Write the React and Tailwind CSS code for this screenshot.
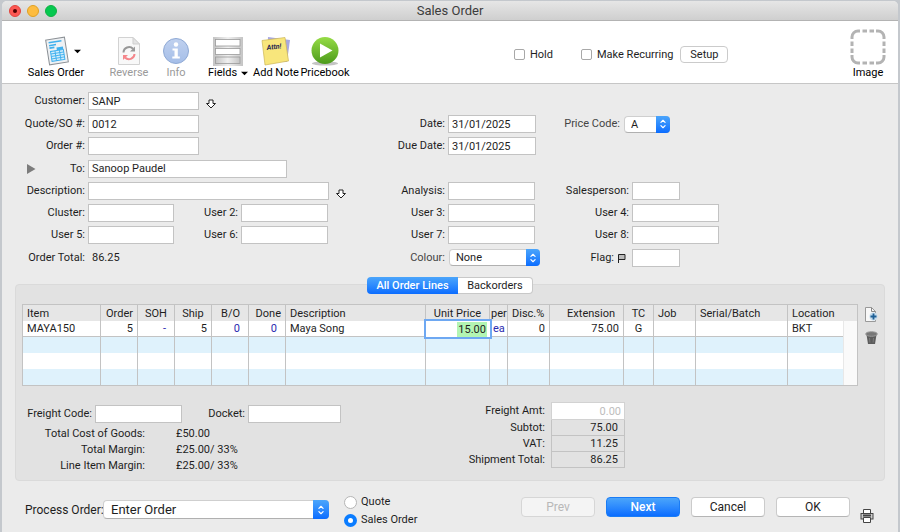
import React from 'react';

const lines = [
  { item: 'MAYA150', order: '5', soh: '-', ship: '5', bo: '0', done: '0', desc: 'Maya Song', price: '15.00', per: 'ea', disc: '0', ext: '75.00', tc: 'G', job: '', serial: '', location: 'BKT' },
];

function Field({ id, label, value = '', labelWidth, width, place = '' }) {
  return (
    <div className={`flex items-center gap-[3px] ${place}`}>
      <label htmlFor={id} className={`shrink-0 text-right whitespace-nowrap ${labelWidth}`}>{label}</label>
      <input id={id} type="text" defaultValue={value} className={`h-[18px] border border-[#c3c3c3] bg-white px-[3px] outline-none ${width}`} />
    </div>
  );
}

function Stepper({ className }) {
  return (
    <span className={`pointer-events-none absolute right-0 top-0 flex h-full items-center justify-center rounded-r-[4px] bg-gradient-to-b from-[#4ba5fb] to-[#0a6cff] ${className}`}>
      <svg viewBox="0 0 8 12" className="h-[10px] w-2" fill="none" stroke="#fff" strokeWidth="1.4" strokeLinecap="round" strokeLinejoin="round">
        <path d="M1.5 4 4 1.5 6.5 4M1.5 8 4 10.5 6.5 8" />
      </svg>
    </span>
  );
}

function Popup({ id, options, className = '', selectClass = '', stepper = 'w-[14px]' }) {
  return (
    <span className={`relative block ${className}`}>
      <select id={id} className={`block h-full w-full appearance-none rounded-[4px] border border-[#cfcfcf] border-b-[#b0b0b0] bg-white outline-none ${selectClass}`}>
        {options.map((o) => <option key={o}>{o}</option>)}
      </select>
      <Stepper className={stepper} />
    </span>
  );
}

function DownArrow() {
  return (
    <button type="button" aria-label="Choose" className="mt-[6px] ml-[6px]">
      <svg viewBox="0 0 12 10" className="h-[10px] w-3" fill="#fff" stroke="#222" strokeWidth="1">
        <path d="M4 1h4v3.5h2.5L6 9 1.5 4.5H4z" />
      </svg>
    </button>
  );
}

function Caret() {
  return (
    <svg viewBox="0 0 8 5" className="h-[5px] w-[7px]"><path d="M0 .5h8L4 4.5z" fill="#000" /></svg>
  );
}

function SalesOrderIcon() {
  return (
    <svg viewBox="0 0 26 30" className="h-[30px] w-[26px]">
      <g transform="rotate(-9 13 15)">
        <rect x="3.500" y="2.500" width="19" height="25" fill="#eef1f4" stroke="#8b9095" />
        <path d="M6 5.500h13M6 8.500h7M6 11h5" stroke="#3fb0ee" strokeWidth="1.600" />
        <path d="M13 11.500h6.500v3H13z" fill="#3fb0ee" />
        <rect x="6.500" y="14.500" width="13" height="10" fill="#d3edfb" stroke="#3fb0ee" />
        <path d="M6.500 17h13M6.500 19.500h13M6.500 22h13M11 14.500v10M15.500 14.500v10" stroke="#3fb0ee" strokeWidth=".9" />
      </g>
    </svg>
  );
}

function ReverseIcon() {
  return (
    <svg viewBox="0 0 22 30" className="h-[30px] w-[22px]" fill="none">
      <path d="M.5 1.500h14.500l6.500 6.500v20.500H.5z" fill="#f8f8f8" stroke="#d2d2d2" />
      <path d="M15 1.500V8h6.500z" fill="#e4e4e4" stroke="#cfcfcf" />
      <path d="M5.500 16.500a5.500 5.500 0 0 1 9.500-3.700" stroke="#989898" strokeWidth="2" />
      <path d="M17 10.500v5h-5z" fill="#989898" />
      <path d="M16.500 18a5.500 5.500 0 0 1-9.500 3.500" stroke="#f5868b" strokeWidth="2" />
      <path d="M5 24v-5h5z" fill="#f5868b" />
    </svg>
  );
}

function InfoIcon() {
  return (
    <svg viewBox="0 0 26 28" className="h-[28px] w-[26px]">
      <defs>
        <linearGradient id="info" x1="0" y1="0" x2="0" y2="1">
          <stop offset="0" stopColor="#c0d1ef" />
          <stop offset="1" stopColor="#a5bee8" />
        </linearGradient>
      </defs>
      <circle cx="13" cy="14" r="12.500" fill="url(#info)" stroke="#8fa9d4" />
      <circle cx="13" cy="7.500" r="2.200" fill="#fff" />
      <path d="M9.500 11.500h5.300v8h2v2H9.300v-2h2.200v-6h-2z" fill="#fff" />
    </svg>
  );
}

function FieldsIcon() {
  return (
    <svg viewBox="0 0 30 30" className="h-[30px] w-[30px]">
      <defs>
        <linearGradient id="fields" x1="0" x2="1">
          <stop offset="0" stopColor="#c4c4c4" />
          <stop offset=".5" stopColor="#f0f0f0" />
          <stop offset="1" stopColor="#c4c4c4" />
        </linearGradient>
      </defs>
      <rect y="1" width="30" height="29" fill="url(#fields)" />
      <g fill="#fff" stroke="#9a9a9a" strokeWidth=".8">
        <rect x="2.500" y="3.500" width="24.500" height="6.500" />
        <rect x="2.500" y="12.500" width="24.500" height="6" />
        <rect x="2.500" y="21" width="24.500" height="6.500" fill="url(#fields)" />
      </g>
    </svg>
  );
}

function NoteIcon() {
  return (
    <svg viewBox="0 0 30 30" className="h-[30px] w-[30px]">
      <path d="M7 1l22 3-3 22-20-2z" fill="#a9a9e0" />
      <path d="M1 4.500 24 1.500 27.500 25 4 29z" fill="#f8e67c" stroke="#cdb656" strokeWidth=".7" />
      <text x="6" y="14" transform="rotate(-7 6 14)" fontSize="7" fontWeight="700" fontStyle="italic" fill="#23234f">Attn!</text>
    </svg>
  );
}

function PlayIcon() {
  return (
    <svg viewBox="0 0 30 30" className="h-[30px] w-[30px]">
      <defs>
        <linearGradient id="play" x1="0" y1="0" x2="0" y2="1">
          <stop offset="0" stopColor="#96dc46" />
          <stop offset="1" stopColor="#4c9a1b" />
        </linearGradient>
      </defs>
      <ellipse cx="15" cy="27.500" rx="13" ry="2" fill="#c4c4c4" />
      <circle cx="15" cy="14.500" r="13.500" fill="url(#play)" />
      <path d="M10 7.500v14l12.500-7z" fill="#fff" />
    </svg>
  );
}

function ToolButton({ icon, label, width, disabled, menu, sideMenu }) {
  return (
    <button type="button" disabled={disabled} className={`flex shrink-0 flex-col items-center ${width} ${disabled ? 'text-[#9a9a9a]' : 'text-black'}`}>
      <span className="flex h-[30px] items-center gap-1">
        {sideMenu && <span className="w-[9px]" />}
        {icon}
        {sideMenu && <Caret />}
      </span>
      <span className="flex items-center gap-1 whitespace-nowrap leading-[14px]">{label}{menu && <Caret />}</span>
    </button>
  );
}

function PushButton({ children, kind = 'plain' }) {
  const kinds = {
    plain: 'border-[#cbcbcb] border-b-[#b5b5b5] bg-white text-[#222]',
    primary: 'border-[#1a7cf5] bg-gradient-to-b from-[#4ba5fb] to-[#0a6cff] text-white font-medium',
    disabled: 'border-[#d6d6d6] bg-[#f4f4f4] text-[#b8b8b8]',
  };
  return (
    <button type="button" disabled={kind === 'disabled'} className={`h-5 w-[74px] rounded-[4px] border text-xs leading-4 ${kinds[kind]}`}>{children}</button>
  );
}

function OrderLines() {
  const th = 'h-4 overflow-hidden border-r border-[#c3c3c3] px-1 font-normal whitespace-nowrap';
  const td = 'h-4 border-r border-b border-[#c3c3c3] px-1 whitespace-nowrap';
  return (
    <table className="w-full table-fixed border-separate border-spacing-0 border border-[#c3c3c3] bg-white leading-[15px]">
      <colgroup>
        <col className="w-[78px]" />
        <col className="w-[37px]" />
        <col className="w-[37px]" />
        <col className="w-[37px]" />
        <col className="w-[37px]" />
        <col className="w-[37px]" />
        <col />
        <col className="w-[64px]" />
        <col className="w-[18px]" />
        <col className="w-[42px]" />
        <col className="w-[74px]" />
        <col className="w-[30px]" />
        <col className="w-[42px]" />
        <col className="w-[92px]" />
        <col className="w-[55px]" />
        <col className="w-[14px]" />
      </colgroup>
      <thead className="bg-[#e6e6e6] text-left">
        <tr>
          <th className={th}>Item</th>
          <th className={`${th} text-right`}>Order</th>
          <th className={`${th} text-center`}>SOH</th>
          <th className={`${th} text-center`}>Ship</th>
          <th className={`${th} text-right`}><span className="pr-1">B/O</span></th>
          <th className={`${th} text-right`}>Done</th>
          <th className={th}>Description</th>
          <th className={`${th} text-right`}><span className="pr-1">Unit Price</span></th>
          <th className="h-4 border-r border-[#c3c3c3] pl-px font-normal whitespace-nowrap">per</th>
          <th className={th}>Disc.%</th>
          <th className={`${th} text-right`}><span className="pr-1">Extension</span></th>
          <th className={`${th} text-center`}>TC</th>
          <th className={th}>Job</th>
          <th className={th}>Serial/Batch</th>
          <th className="px-1 font-normal" colSpan={2}>Location</th>
        </tr>
      </thead>
      <tbody>
        {lines.map((l) => (
          <tr key={l.item}>
            <td className={td}>{l.item}</td>
            <td className={`${td} text-right`}>{l.order}</td>
            <td className={`${td} text-right text-[#2a2ab0]`}><span className="pr-1">{l.soh}</span></td>
            <td className={`${td} text-right`}>{l.ship}</td>
            <td className={`${td} text-right text-[#2a2ab0]`}><span className="pr-1">{l.bo}</span></td>
            <td className={`${td} text-right text-[#2a2ab0]`}><span className="pr-1">{l.done}</span></td>
            <td className={td}>{l.desc}</td>
            <td className="h-4 p-0">
              <div className="relative flex h-4 items-center justify-end bg-white pr-[3px] ring-2 ring-[#6ea8f2]">
                <span className="bg-[#b3f5b3] px-px">{l.price}</span>
              </div>
            </td>
            <td className="h-4 border-r border-b border-[#c3c3c3] pl-[3px] text-[#2a2ab0]">{l.per}</td>
            <td className={`${td} text-right`}>{l.disc}</td>
            <td className={`${td} text-right`}>{l.ext}</td>
            <td className={`${td} text-center`}>{l.tc}</td>
            <td className={td}>{l.job}</td>
            <td className={td}>{l.serial}</td>
            <td className="h-4 border-b border-[#c3c3c3] px-1">{l.location}</td>
            <td rowSpan={4} className="border-l border-[#e8e8e8] bg-[#fafafa]" />
          </tr>
        ))}
        {[0, 1, 2].map((r) => (
          <tr key={r} className={r % 2 === 0 ? 'bg-[#dff2fc]' : 'bg-white'}>
            {Array.from({ length: 14 }, (_, c) => <td key={c} className="h-4 border-r border-[#c3c3c3]" />)}
            <td className="h-4" />
          </tr>
        ))}
      </tbody>
    </table>
  );
}

export default function App() {
  return (
    <div className="min-h-screen bg-[#c4c8cd] px-[2px] pt-[1px] font-[Roboto,'Liberation_Sans',sans-serif] text-[11px] leading-4 text-[#1e1e1e]">
      <div className="flex min-h-[calc(100vh-1px)] flex-col overflow-hidden rounded-t-[5px] bg-[#ebebeb]">
        <header className="relative flex h-5 items-center gap-[6px] border-b border-[#b3b3b3] bg-gradient-to-b from-[#e6e6e6] to-[#cfcfcf] px-[7px]">
          <button type="button" aria-label="Close" className="flex size-3 items-center justify-center rounded-full border border-[#e0443e] bg-[#fc5753]"><span className="size-1 rounded-full bg-[#4d0000]" /></button>
          <button type="button" aria-label="Minimise" className="size-3 rounded-full border border-[#dfa023] bg-[#fdbc40]" />
          <button type="button" aria-label="Zoom" className="size-3 rounded-full border border-[#10b043] bg-[#06c850]" />
          <h1 className="absolute inset-x-0 text-center text-[13px] text-[#3c3c3c]">Sales Order</h1>
        </header>

        <div className="flex h-[63px] items-start border-b border-[#c6c6c6] bg-white pl-[24px] pt-[15px]">
          <ToolButton icon={<SalesOrderIcon />} label="Sales Order" width="w-[60px]" sideMenu />
          <span className="w-[22px]" />
          <ToolButton icon={<ReverseIcon />} label="Reverse" width="w-[42px]" disabled />
          <span className="w-2" />
          <ToolButton icon={<InfoIcon />} label="Info" width="w-[36px]" disabled />
          <span className="w-[10px]" />
          <ToolButton icon={<FieldsIcon />} label="Fields" width="w-[48px]" menu />
          <ToolButton icon={<NoteIcon />} label="Add Note" width="w-[48px]" />
          <ToolButton icon={<PlayIcon />} label="Pricebook" width="w-[50px]" />
          <div className="flex flex-1 items-center pl-[164px] pt-[10px]">
            <label className="flex items-center gap-[5px]">
              <input type="checkbox" className="size-[11px] appearance-none rounded-[2px] border border-[#a8a8a8] bg-white" />Hold
            </label>
            <label className="ml-7 flex items-center gap-[5px] whitespace-nowrap">
              <input type="checkbox" className="size-[11px] appearance-none rounded-[2px] border border-[#a8a8a8] bg-white" />Make Recurring
            </label>
            <button type="button" className="ml-[7px] h-[17px] w-12 rounded-[4px] border border-[#cbcbcb] bg-white leading-[14px]">Setup</button>
          </div>
          <button type="button" className="-mt-[7px] mr-3 flex flex-col items-center text-black">
            <svg viewBox="0 0 36 36" className="size-9" fill="none" stroke="#b3b3b3" strokeWidth="3">
              <path d="M2 10V8a6 6 0 0 1 6-6h2M26 2h2a6 6 0 0 1 6 6v2M34 26v2a6 6 0 0 1-6 6h-2M10 34H8a6 6 0 0 1-6-6v-2" />
              <path d="M12.500 2h4.500M19.500 2h4.500M12.500 34h4.500M19.500 34h4.500M2 12.500V17M2 19.500V24M34 12.500V17M34 19.500V24" />
            </svg>
            Image
          </button>
        </div>

        <div className="grid grid-cols-[358fr_180fr_358fr] grid-rows-[24px_22px_22px_23px_22px_22px_22px_23px] pt-[5px]">
          <div className="col-start-1 flex items-center">
            <Field id="customer" label="Customer:" value="SANP" labelWidth="w-[83px]" width="w-[111px]" />
            <DownArrow />
          </div>
          <Field id="quote" label="Quote/SO #:" value="0012" labelWidth="w-[83px]" width="w-[111px]" place="col-start-1 row-start-2" />
          <Field id="orderno" label="Order #:" labelWidth="w-[83px]" width="w-[111px]" place="col-start-1 row-start-3" />
          <div className="col-start-1 row-start-4 flex items-center pl-6">
            <button type="button" aria-label="Show address">
              <svg viewBox="0 0 10 10" className="size-[10px]"><path d="M1 0v10l8.500-5z" fill="#7c7c7c" /></svg>
            </button>
            <Field id="to" label="To:" value="Sanoop Paudel" labelWidth="w-[49px]" width="w-[199px]" />
          </div>
          <div className="col-start-1 row-start-5 flex items-center">
            <Field id="description" label="Description:" labelWidth="w-[83px]" width="w-[241px]" />
            <DownArrow />
          </div>
          <div className="col-start-1 row-start-6 flex items-center">
            <Field id="cluster" label="Cluster:" labelWidth="w-[83px]" width="w-[86px]" />
            <Field id="user2" label="User 2:" labelWidth="w-[64px]" width="w-[87px]" />
          </div>
          <div className="col-start-1 row-start-7 flex items-center">
            <Field id="user5" label="User 5:" labelWidth="w-[83px]" width="w-[86px]" />
            <Field id="user6" label="User 6:" labelWidth="w-[64px]" width="w-[87px]" />
          </div>
          <p className="col-start-1 row-start-8 flex items-center gap-[7px]">
            <span className="w-[83px] text-right">Order Total:</span>
            <span>86.25</span>
          </p>

          <Field id="date" label="Date:" value="31/01/2025" labelWidth="w-[85px]" width="w-[88px]" place="col-start-2 row-start-2" />
          <Field id="due" label="Due Date:" value="31/01/2025" labelWidth="w-[85px]" width="w-[88px]" place="col-start-2 row-start-3" />
          <Field id="analysis" label="Analysis:" labelWidth="w-[85px]" width="w-[87px]" place="col-start-2 row-start-5" />
          <Field id="user3" label="User 3:" labelWidth="w-[85px]" width="w-[87px]" place="col-start-2 row-start-6" />
          <Field id="user7" label="User 7:" labelWidth="w-[85px]" width="w-[87px]" place="col-start-2 row-start-7" />
          <div className="col-start-2 row-start-8 flex items-center gap-1">
            <label htmlFor="colour" className="w-[85px] text-right text-[#444]">Colour:</label>
            <Popup id="colour" options={['None']} className="h-[17px] w-[91px]" selectClass="pl-[6px]" />
          </div>

          <div className="col-start-3 row-start-2 flex items-center gap-1">
            <label htmlFor="pricecode" className="w-[80px] text-right text-[#444]">Price Code:</label>
            <Popup id="pricecode" options={['A']} className="h-[17px] w-[46px]" selectClass="pl-[6px]" />
          </div>
          <Field id="salesperson" label="Salesperson:" labelWidth="w-[89px]" width="w-[48px]" place="col-start-3 row-start-5" />
          <Field id="user4" label="User 4:" labelWidth="w-[89px]" width="w-[87px]" place="col-start-3 row-start-6" />
          <Field id="user8" label="User 8:" labelWidth="w-[89px]" width="w-[87px]" place="col-start-3 row-start-7" />
          <div className="col-start-3 row-start-8 flex items-center gap-[3px]">
            <label htmlFor="flag" className="flex w-[89px] items-center justify-end gap-[3px] pr-[3px]">
              Flag:
              <svg viewBox="0 0 9 10" className="h-[10px] w-[9px]"><path d="M1.500 10V1.500h6.500v5H1.500" fill="#bbb" stroke="#222" /></svg>
            </label>
            <input id="flag" type="text" className="h-[18px] w-12 border border-[#c3c3c3] bg-white px-[3px]" />
          </div>
        </div>

        <div className="relative z-10 mt-2 flex justify-center">
          <button type="button" className="h-[17px] w-[91px] rounded-l-[4px] bg-gradient-to-b from-[#4ba5fb] to-[#0a6cff] font-medium text-white">All Order Lines</button>
          <button type="button" className="h-[17px] w-[75px] rounded-r-[4px] border border-l-0 border-[#c8c8c8] bg-white leading-[14px]">Backorders</button>
        </div>

        <section className="mx-[13px] -mt-[10px] rounded-[4px] border border-[#dadada] bg-[#e2e2e2] pb-[6px] pl-[6px] pt-[19px]">
          <div className="flex">
            <div className="flex-1"><OrderLines /></div>
            <div className="flex w-[26px] flex-col items-center gap-[9px] pt-[3px]">
              <button type="button" aria-label="Add line">
                <svg viewBox="0 0 14 15" className="h-[15px] w-[14px]">
                  <path d="M1.500.5h6l4 4v10h-10z" fill="#f8f8f8" stroke="#999" />
                  <path d="M7.500.5v4h4" fill="none" stroke="#888" />
                  <circle cx="9.500" cy="9.500" r="4" fill="#c6dcec" />
                  <path d="M9.500 6.500v6M6.500 9.500h6" stroke="#1d5f96" strokeWidth="1.800" />
                </svg>
              </button>
              <button type="button" aria-label="Delete line">
                <svg viewBox="0 0 13 14" className="h-[14px] w-[13px]">
                  <path d="M1.500 3.500h10l-1.500 9.500H3z" fill="#5c5c5c" />
                  <ellipse cx="6.500" cy="3" rx="5.800" ry="2.300" fill="#777" stroke="#999" />
                  <path d="M4.500 7l.4 4.500M8.500 7l-.4 4.500" stroke="#888" strokeWidth=".7" />
                </svg>
              </button>
            </div>
          </div>

          <div className="mt-4 flex justify-between">
            <div>
              <div className="flex items-center pt-[3px]">
                <Field id="freightcode" label="Freight Code:" labelWidth="w-[70px]" width="w-[87px]" />
                <Field id="docket" label="Docket:" labelWidth="w-[63px]" width="w-[93px]" />
              </div>
              <dl className="mt-[3px] grid grid-cols-[123px_auto] gap-x-[31px]">
                <dt className="text-right">Total Cost of Goods:</dt><dd>£50.00</dd>
                <dt className="text-right">Total Margin:</dt><dd>£25.00/ 33%</dd>
                <dt className="text-right">Line Item Margin:</dt><dd>£25.00/ 33%</dd>
              </dl>
            </div>
            <div className="mr-[259px] grid grid-cols-[auto_74px] content-start items-center gap-x-[6px] text-right">
              <label htmlFor="freightamt">Freight Amt:</label>
              <input id="freightamt" type="text" defaultValue="0.00" className="h-[18px] w-full border border-[#d2d2d2] bg-white px-[3px] text-right text-[#bdbdbd]" />
              <span>Subtot:</span><output className="border border-t-0 border-[#c3c3c3] pr-[6px] leading-[15px]">75.00</output>
              <span>VAT:</span><output className="border border-t-0 border-[#c3c3c3] pr-[6px] leading-[15px]">11.25</output>
              <span>Shipment Total:</span><output className="border border-t-0 border-[#c3c3c3] pr-[6px] leading-[15px]">86.25</output>
            </div>
          </div>
        </section>

        <footer className="mt-[13px] flex items-start pl-[23px] pr-[24px]">
          <label htmlFor="process" className="mt-2 w-[78px] text-xs whitespace-nowrap">Process Order:</label>
          <Popup id="process" options={['Enter Order']} className="mt-[6px] h-[19px] w-[226px]" selectClass="pl-[7px] text-[13px]" stepper="w-4" />
          <div className="ml-[15px] flex flex-col gap-[2px]">
            <label className="flex items-center gap-1"><input type="radio" name="kind" className="size-[13px] appearance-none rounded-full border border-[#b5b5b5] bg-white" />Quote</label>
            <label className="flex items-center gap-1"><input type="radio" name="kind" defaultChecked className="size-[13px] appearance-none rounded-full border-[#0a7cff] bg-white checked:border-[4px]" />Sales Order</label>
          </div>
          <div className="ml-auto mt-[3px] flex gap-[11px]">
            <PushButton kind="disabled">Prev</PushButton>
            <PushButton kind="primary">Next</PushButton>
            <PushButton>Cancel</PushButton>
            <PushButton>OK</PushButton>
          </div>
          <button type="button" aria-label="Print" className="ml-[10px] mt-[15px]">
            <svg viewBox="0 0 14 14" className="size-[14px]" fill="#ccc" stroke="#444">
              <path d="M3.500 4.500v-4h7v4" fill="#fff" />
              <rect x="1" y="4.500" width="12" height="5.500" />
              <path d="M3.500 8.500h7v5h-7z" fill="#fff" />
              <path d="M3 6.500h8" strokeWidth="2" />
            </svg>
          </button>
        </footer>
      </div>
    </div>
  );
}
